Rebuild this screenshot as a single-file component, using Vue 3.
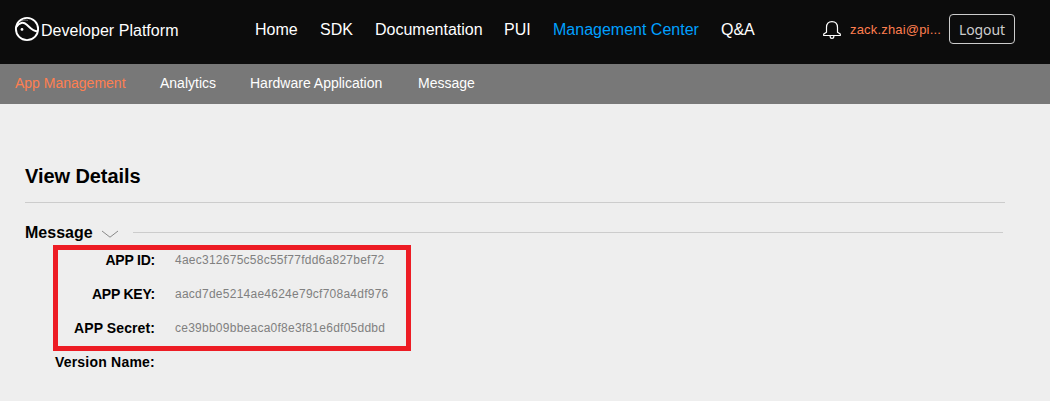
<script setup>
const mainNav = [
  { label: 'Home', id: 'home' },
  { label: 'SDK', id: 'sdk' },
  { label: 'Documentation', id: 'docs' },
  { label: 'PUI', id: 'pui' },
  { label: 'Management Center', id: 'center', active: true },
  { label: 'Q&A', id: 'qa' },
]
const subNav = [
  { label: 'App Management', id: 'apps', active: true },
  { label: 'Analytics', id: 'analytics' },
  { label: 'Hardware Application', id: 'hardware' },
  { label: 'Message', id: 'message' },
]
const credentials = [
  { label: 'APP ID:', id: 'id', value: '4aec312675c58c55f77fdd6a827bef72' },
  { label: 'APP KEY:', id: 'key', value: 'aacd7de5214ae4624e79cf708a4df976' },
  { label: 'APP Secret:', id: 'secret', value: 'ce39bb09bbeaca0f8e3f81e6df05ddbd' },
]
</script>

<template>
  <div class="page">
    <header class="topbar">
      <div class="brand">
        <svg class="logo" width="26" height="26" viewBox="0 0 26 26" fill="none" stroke="#fff">
          <circle cx="13" cy="13" r="11.1" stroke-width="1.9" />
          <path d="M2.5 10.8C5.2 6.4 9.3 5.6 12.8 8.7C16.2 11.8 18.5 15.3 23.6 15.4" stroke-width="2" />
          <path d="M6 5.4C8.5 4 11.5 3.8 14 4.4" stroke-width="0.8" opacity="0.5" />
          <circle cx="8" cy="13.4" r="1.4" fill="#fff" stroke="none" />
        </svg>
        <span class="brand-name">Developer Platform</span>
      </div>
      <nav class="main-nav">
        <a v-for="n in mainNav" :key="n.id" :class="['nav-' + n.id, { active: n.active }]">{{ n.label }}</a>
      </nav>
      <div class="account">
        <svg class="bell" width="20" height="20" viewBox="0 0 20 20" fill="none" stroke="#fff" stroke-width="1.2">
          <path d="M4.5 12.3V7.5C4.5 3.8 6.4 1.6 10 1.6S15.5 3.8 15.5 7.5V12.3L18.3 14.1V15.5H1.7V14.1Z" stroke-linejoin="round" />
          <path d="M8.2 15.8V17Q8.2 18.3 10 18.3T11.8 17V15.8" />
        </svg>
        <span class="user">zack.zhai@pi...</span>
        <button class="logout">Logout</button>
      </div>
    </header>
    <nav class="subnav">
      <a v-for="n in subNav" :key="n.id" :class="['sub-' + n.id, { active: n.active }]">{{ n.label }}</a>
    </nav>
    <main class="content">
      <h1>View Details</h1>
      <div class="section-head">
        <h2>Message</h2>
        <svg class="chevron" width="18" height="9" viewBox="0 0 18 9" fill="none" stroke="#888">
          <path d="M1 1L9 7.2L17 1" />
        </svg>
        <span class="rule"></span>
      </div>
      <div class="highlight">
        <div v-for="c in credentials" :key="c.id" class="row">
          <span :class="['label', 'label-' + c.id]">{{ c.label }}</span>
          <span :class="['value', 'value-' + c.id]">{{ c.value }}</span>
        </div>
      </div>
      <div class="row last">
        <span class="label label-version">Version Name:</span>
      </div>
    </main>
  </div>
</template>

<style>
body {
  margin: 0;
  background: #eee;
}
</style>

<style scoped>
.page {
  width: 1050px;
  height: 401px;
  overflow: hidden;
  background: #eee;
  color: #000;
  font-family: "Liberation Sans", Arial, sans-serif;
}
.topbar {
  display: flex;
  box-sizing: border-box;
  height: 64px;
  padding-left: 14px;
  background: #0c0c0c;
  color: #fff;
}
.brand {
  display: flex;
  width: 241px;
  padding-top: 16px;
  box-sizing: border-box;
}
.brand-name {
  margin-left: 1px;
  padding-top: 5px;
  font-size: 16px;
  line-height: 20px;
  letter-spacing: 0.03px;
  white-space: nowrap;
}
.main-nav {
  display: flex;
  width: 567px;
  padding-top: 20px;
  font-size: 16px;
  line-height: 20px;
  white-space: nowrap;
}
.nav-home { width: 65px; }
.nav-sdk { width: 55px; }
.nav-docs { width: 129px; }
.nav-pui { width: 49px; }
.nav-center { width: 168px; }
.main-nav .active { color: #00a0ff; }
.account {
  display: flex;
  align-items: flex-start;
}
.bell {
  margin-top: 20px;
}
.user {
  width: 99px;
  margin-left: 8px;
  padding-top: 20px;
  color: #ff7f50;
  font-size: 13px;
  line-height: 20px;
  letter-spacing: 0.18px;
  white-space: nowrap;
}
.logout {
  box-sizing: border-box;
  width: 66px;
  height: 30px;
  margin: 14px 0 0;
  padding: 1px 0 0;
  border: 1px solid #ccc;
  border-radius: 4px;
  background: transparent;
  color: #ccc;
  font: 14px "Noto Sans", sans-serif;
  letter-spacing: -0.1px;
}
.subnav {
  display: flex;
  box-sizing: border-box;
  height: 40px;
  padding: 9px 0 0 15px;
  background: #787878;
  color: #fff;
  font-size: 14px;
  line-height: 20px;
  white-space: nowrap;
}
.sub-apps { width: 145px; }
.sub-analytics { width: 90px; }
.sub-hardware { width: 168px; }
.subnav .active { color: #ff7f50; }
.content {
  padding: 57px 45px 0 25px;
}
h1 {
  box-sizing: border-box;
  height: 42px;
  margin: 0;
  padding-top: 3px;
  border-bottom: 1px solid #ccc;
  font-size: 20px;
  line-height: 24px;
  letter-spacing: -0.07px;
}
.section-head {
  display: flex;
  height: 42px;
  padding-top: 19px;
  box-sizing: border-box;
}
h2 {
  width: 76px;
  margin: 1px 0 0;
  font-size: 16px;
  line-height: 20px;
}
.chevron {
  margin-top: 8px;
}
.rule {
  flex: 1;
  height: 1px;
  margin: 10px 2px 0 14px;
  background: #ccc;
}
.highlight {
  box-sizing: border-box;
  width: 358px;
  height: 106px;
  margin-left: 28px;
  border: 5px solid #ed1c24;
}
.row {
  display: flex;
  height: 34px;
  line-height: 20px;
  white-space: nowrap;
}
.label {
  width: 97px;
  text-align: right;
  font-size: 14px;
  font-weight: bold;
}
.label-id,
.label-key {
  letter-spacing: -0.22px;
}
.label-secret {
  letter-spacing: 0.1px;
}
.value {
  margin-left: 20px;
  color: #808080;
  font-size: 12px;
  letter-spacing: 0.25px;
}
.last {
  padding-top: 1px;
}
.last .label {
  width: 130px;
  letter-spacing: 0.22px;
}
</style>
